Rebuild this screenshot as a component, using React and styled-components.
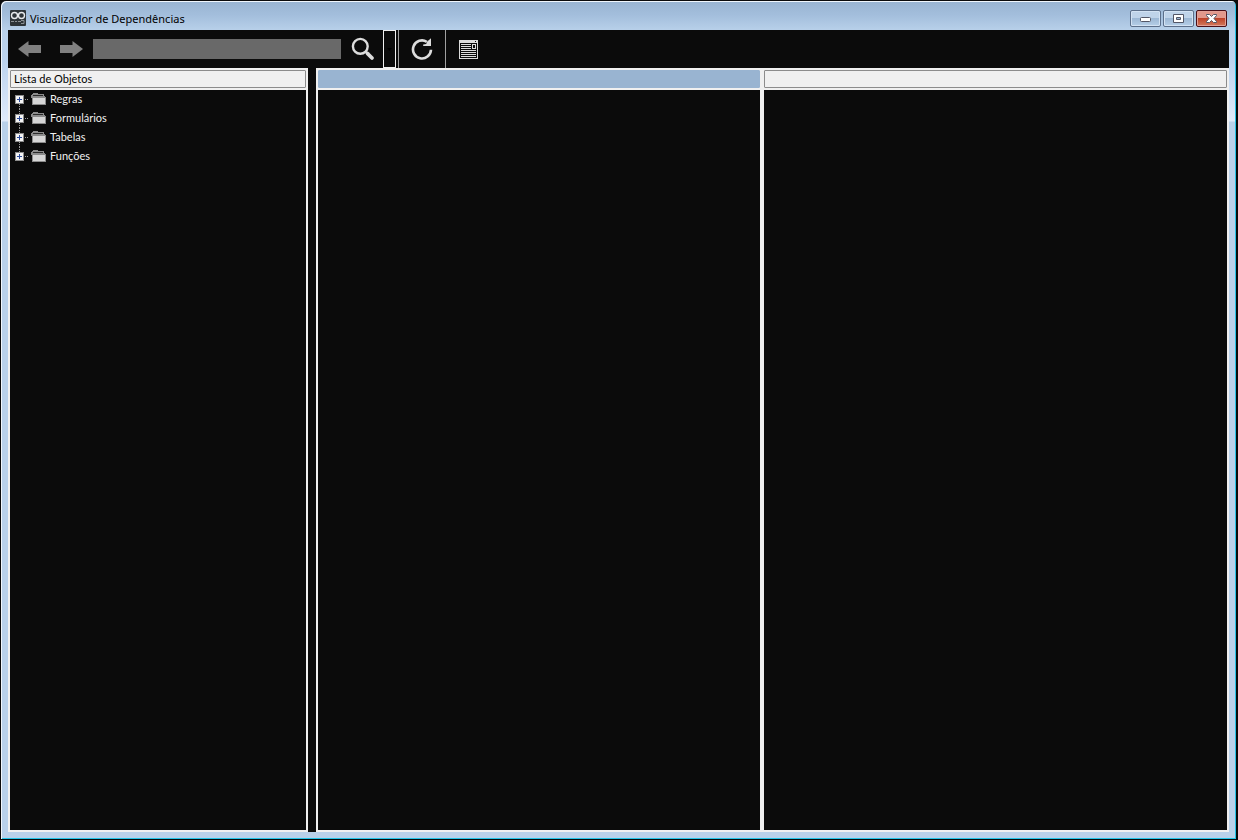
import React from "react";
import styled, { createGlobalStyle } from "styled-components";

const GlobalStyle = createGlobalStyle`
  * { box-sizing: border-box; }
  html, body, #root { height: 100%; margin: 0; }
  body { background: #0b0b0b; font: 11px/14px Lato, "Liberation Sans", sans-serif; }
  button, input { font: inherit; margin: 0; padding: 0; }
  svg { display: block; }
`;

const Window = styled.div`
  height: 100vh;
  display: flex;
  flex-direction: column;
  padding: 0 7px 7px;
  background: linear-gradient(#99b4d1 0, #a3bedc 14px, #b9d1ea 30px, #bcd3ee 60px, #dfeafa 120px, #b9d1ea 121px);
  border: 1px solid #0b0b0b;
  border-right-width: 2px;
  border-radius: 6px 6px 0 0;
  box-shadow: inset 1px 1px 0 #f0f6fc, inset -1px -1px 0 #23c4e8;
`;

const TitleBar = styled.header`
  flex: none;
  height: 29px;
  display: flex;
  align-items: center;
  padding: 5px 2px 0 2px;
`;

const Title = styled.h1`
  flex: 1;
  margin: 0;
  padding: 1px 0 0 4px;
  font: 11px/16px "Noto Sans", "Segoe UI", sans-serif;
  color: #000;
`;

const Controls = styled.div`
  display: flex;
  gap: 2px;
`;

const ControlButton = styled.button`
  width: 31px;
  height: 17px;
  display: grid;
  place-items: center;
  padding-top: ${(p) => (p.$low ? "3px" : "0")};
  border: 1px solid ${(p) => (p.$danger ? "#4a0f18" : "#5c6f8a")};
  border-radius: 2px;
  box-shadow: inset 0 0 0 1px ${(p) => (p.$danger ? "#e3a096" : "#d3e2f3")};
  background: ${(p) =>
    p.$danger
      ? "linear-gradient(#e2988c 0 46%, #bd3f26 47%, #d27a5e)"
      : "linear-gradient(#bfd3e9 0 46%, #9bb6d3 47%, #b6cfe8)"};
`;

const Content = styled.main`
  flex: 1;
  min-height: 0;
  display: flex;
  flex-direction: column;
  background: #0b0b0b;
`;

const Toolbar = styled.div`
  flex: none;
  height: 38px;
  display: flex;
  align-items: center;
`;

const ToolButton = styled.button`
  width: ${(p) => p.$width}px;
  height: 38px;
  flex: none;
  display: grid;
  place-items: center;
  border: 0;
  border-left: ${(p) => (p.$divided ? "1px solid #a0a0a0" : "0")};
  background: transparent;
`;

const SearchInput = styled.input`
  width: 248px;
  height: 20px;
  margin-left: 1px;
  border: 0;
  padding: 0 4px;
  background: #696969;
  color: #fff;
`;

const MenuButton = styled.button`
  width: 13px;
  height: 38px;
  margin-right: 2px;
  display: grid;
  place-items: center;
  border: 1px solid #f0f0f0;
  background: #0b0b0b;
`;

const Panels = styled.div`
  flex: 1;
  min-height: 0;
  display: flex;
  gap: 8px;
`;

const Panel = styled.section`
  flex: ${(p) => p.$flex};
  display: flex;
  gap: 4px;
  padding: 2px;
  background: #f0f0f0;
`;

const Column = styled.div`
  flex: ${(p) => p.$flex};
  display: flex;
  flex-direction: column;
  gap: 2px;
`;

const ColumnHeader = styled.h2`
  height: 18px;
  margin: 0;
  padding: 1px 3px;
  font: inherit;
  color: #000;
  border: 1px solid ${(p) => (p.$selected ? "#99b4d1" : "#8c8c8c")};
  border-radius: 1px;
  background: ${(p) => (p.$selected ? "#99b4d1" : "#f0f0f0")};
`;

const Body = styled.div`
  flex: 1;
  background: #0b0b0b;
`;

const Tree = styled.ul`
  margin: 0;
  padding: 0 0 0 4px;
  list-style: none;
`;

const TreeItem = styled.li`
  height: 19px;
  display: flex;
  align-items: center;
  color: #f0f0f0;
`;

const Expander = styled.button`
  width: 17px;
  height: 19px;
  border: 0;
  background: transparent;
`;

const ItemLabel = styled.span`
  padding: 0 0 1px 4px;
`;

const AppLogo = () => (
  <svg width="16" height="16" viewBox="0 0 16 16" aria-hidden="true">
    <rect width="16" height="16" rx="1" fill="#2e3438" />
    <circle cx="4.5" cy="5.5" r="3" fill="none" stroke="#e8eaec" strokeWidth="1.4" />
    <circle cx="11.5" cy="5.5" r="3" fill="none" stroke="#e8eaec" strokeWidth="1.4" />
    <path d="M1 11.5h3M5 11.5h2M8 11.5h3M11 10.5h3v3h-3" fill="none" stroke="#8b9094" />
  </svg>
);

const Arrow = ({ forward }) => (
  <svg width="23" height="16" viewBox="0 0 23 16" aria-hidden="true">
    <path
      d={forward ? "M0 4h12.500V0L23 8l-10.500 8v-4H0z" : "M23 4H10.500V0L0 8l10.500 8v-4H23z"}
      fill="#808080"
    />
  </svg>
);

const Magnifier = () => (
  <svg width="26" height="24" viewBox="0 0 26 24" aria-hidden="true">
    <circle cx="11.300" cy="9.300" r="7.400" fill="none" stroke="#dcdcdc" strokeWidth="2.400" />
    <path d="M16.500 14.500l2.500 2.500" stroke="#dcdcdc" strokeWidth="2.400" />
    <path d="M18.500 16.500l4.500 4.500" stroke="#dcdcdc" strokeWidth="3.800" strokeLinecap="round" />
  </svg>
);

const Refresh = () => (
  <svg width="22" height="22" viewBox="0 0 22 22" aria-hidden="true">
    <path d="M20 11.800A9 9 0 1 1 15.800 3.800" fill="none" stroke="#dcdcdc" strokeWidth="2.600" />
    <path d="M20 .3v7.700h-7.800v-1.500l3-.5 1-2.500z" fill="#dcdcdc" />
  </svg>
);

const FormIcon = () => (
  <svg width="19" height="19" viewBox="0 0 19 19" shapeRendering="crispEdges" aria-hidden="true">
    <path
      fill="#dcdcdc"
      fillRule="evenodd"
      d="M0 0h19v19H0zM16 1h1v1h-1zM1 3h17v15H1z"
    />
    <path
      stroke="#dcdcdc"
      d="M2 4.500h10M2 6.500h10M2 8.500h10M2 10.500h15M2 12.500h15M2 14.500h15M2 16.500h15"
    />
    <rect x="13.500" y="4.500" width="3" height="4" fill="#0b0b0b" stroke="#dcdcdc" />
  </svg>
);

const PlusBranch = ({ first, last }) => (
  <svg width="17" height="19" viewBox="0 0 17 19" shapeRendering="crispEdges" aria-hidden="true">
    {!first && <path d="M5.500 0v5" stroke="#9a9a9a" strokeDasharray="1 1" />}
    {!last && <path d="M5.500 14v5" stroke="#9a9a9a" strokeDasharray="1 1" />}
    <path d="M11 9.500h4" stroke="#9a9a9a" strokeDasharray="1 1" />
    <rect x="1.500" y="5.500" width="8" height="8" fill="#f4f4f4" stroke="#8c8c8c" />
    <path d="M3 9.500h5M5.500 7v5" stroke="#2b4a9b" />
  </svg>
);

const Folder = () => (
  <svg width="15" height="13" viewBox="0 0 15 13" shapeRendering="crispEdges" aria-hidden="true">
    <path d="M1 1h1V0h5v1h6v2h1v1h1v8H1V5H0V2h1z" fill="#8c8c8c" />
    <path d="M2 2h10v1H2z" fill="#2a2a2a" />
    <path d="M2 5h12v6H2z" fill="#d6d6d6" />
  </svg>
);

const objects = ["Regras", "Formulários", "Tabelas", "Funções"];

export default function App() {
  return (
    <>
      <GlobalStyle />
      <Window>
        <TitleBar>
          <AppLogo />
          <Title>Visualizador de Dependências</Title>
          <Controls>
            <ControlButton $low aria-label="Minimizar">
              <svg width="11" height="5" aria-hidden="true">
                <rect x="0.5" y="0.5" width="10" height="4" rx="1" fill="#fff" stroke="#535666" />
              </svg>
            </ControlButton>
            <ControlButton aria-label="Maximizar">
              <svg width="11" height="9" aria-hidden="true">
                <path d="M.5.5h10v8H.5zM3.500 3.500v2h4v-2z" fill="#fff" fillRule="evenodd" stroke="#535666" />
              </svg>
            </ControlButton>
            <ControlButton $danger aria-label="Fechar">
              <svg width="11" height="9" aria-hidden="true">
                <path d="M.5.5h3l2 2 2-2h3v1l-2.500 3 2.500 3v1h-3l-2-2-2 2h-3v-1l2.500-3-2.500-3z" fill="#fff" stroke="#535666" />
              </svg>
            </ControlButton>
          </Controls>
        </TitleBar>
        <Content>
          <Toolbar>
            <ToolButton $width={43} aria-label="Voltar"><Arrow /></ToolButton>
            <ToolButton $width={41} aria-label="Avançar"><Arrow forward /></ToolButton>
            <SearchInput aria-label="Pesquisar objeto" />
            <ToolButton $width={42} aria-label="Pesquisar"><Magnifier /></ToolButton>
            <MenuButton aria-label="Opções de pesquisa">
              <svg width="5" height="3" aria-hidden="true"><path d="M0 0h5L2.500 3z" fill="#000" /></svg>
            </MenuButton>
            <ToolButton $width={47} $divided aria-label="Atualizar"><Refresh /></ToolButton>
            <ToolButton $width={46} $divided aria-label="Formulário"><FormIcon /></ToolButton>
          </Toolbar>
          <Panels>
            <Panel $flex="0 0 300px">
              <Column $flex="1">
                <ColumnHeader>Lista de Objetos</ColumnHeader>
                <Body>
                  <Tree>
                    {objects.map((name, i) => (
                      <TreeItem key={name}>
                        <Expander aria-label={`Expandir ${name}`}>
                          <PlusBranch first={i === 0} last={i === objects.length - 1} />
                        </Expander>
                        <Folder />
                        <ItemLabel>{name}</ItemLabel>
                      </TreeItem>
                    ))}
                  </Tree>
                </Body>
              </Column>
            </Panel>
            <Panel $flex="1">
              <Column $flex="442 1 0">
                <ColumnHeader $selected />
                <Body />
              </Column>
              <Column $flex="463 1 0">
                <ColumnHeader />
                <Body />
              </Column>
            </Panel>
          </Panels>
        </Content>
      </Window>
    </>
  );
}
